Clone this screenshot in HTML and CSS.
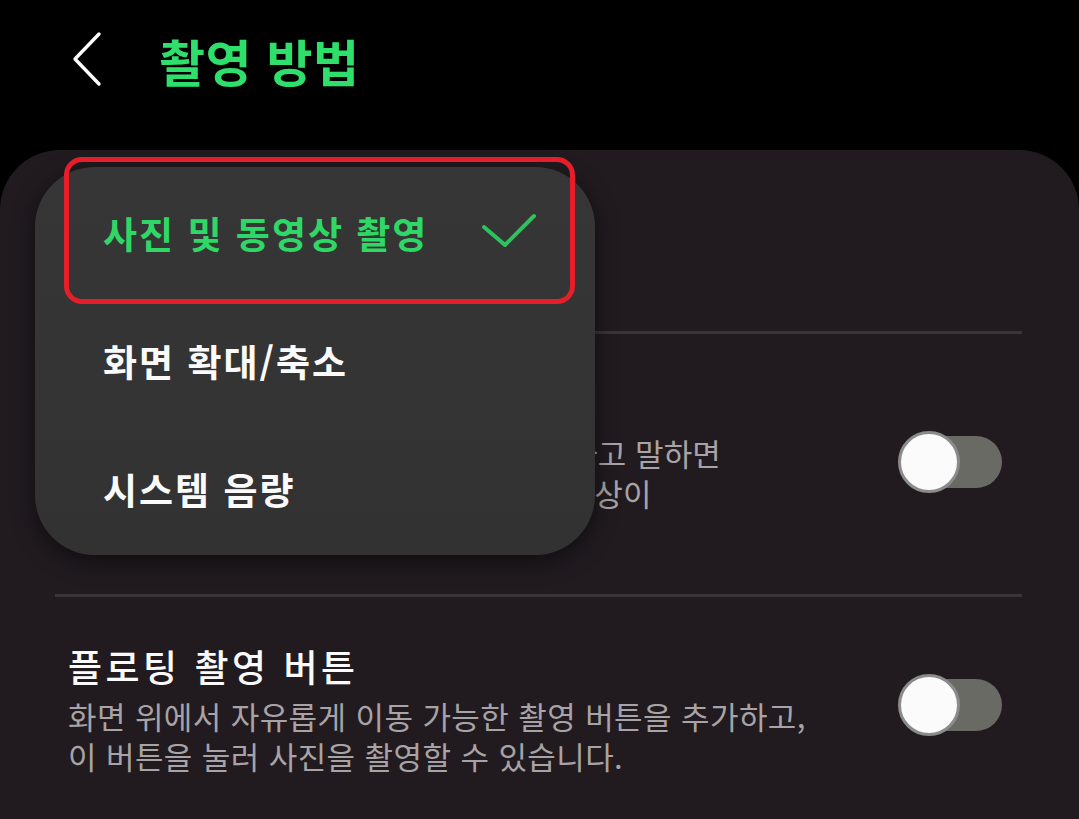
FILE: index.html
```html
<!DOCTYPE html>
<html lang="ko">
<head>
<meta charset="utf-8">
<title>촬영 방법</title>
<link rel="stylesheet" href="styles.css">
</head>
<body>
<div class="screen">
  <header class="topbar">
    <svg class="back" width="32" height="56" viewBox="0 0 32 56" aria-hidden="true">
      <polyline points="27,3 3,28 27,53" fill="none" stroke="#ffffff" stroke-width="3.4" stroke-linecap="round" stroke-linejoin="round"/>
    </svg>
    <h1 class="title">촬영 방법</h1>
  </header>

  <main class="card">
    <div class="list">
      <div class="row row-first">
        <div class="row-text">
          <div class="row-title">음량 버튼 누르기</div>
          <div class="row-sub">사진 및 동영상 촬영</div>
        </div>
      </div>
      <div class="row">
        <div class="row-text">
          <div class="row-title">음성 명령</div>
          <div class="row-desc"><span class="tight">'스마일', '치즈', '캡처', '촬영', '찰칵'이라고 말하면</span><br>사진이 촬영되고, '녹화'라고 말하면 동영상이<br>촬영됩니다.</div>
        </div>
        <div class="toggle"><span class="track"></span><span class="thumb"></span></div>
      </div>
      <div class="row">
        <div class="row-text">
          <div class="row-title">플로팅 촬영 버튼</div>
          <div class="row-desc">화면 위에서 자유롭게 이동 가능한 촬영 버튼을 추가하고,<br>이 버튼을 눌러 사진을 촬영할 수 있습니다.</div>
        </div>
        <div class="toggle"><span class="track"></span><span class="thumb"></span></div>
      </div>
    </div>

    <div class="menu">
      <div class="highlight"></div>
      <div class="menu-item selected">
        <span>사진 및 동영상 촬영</span>
        <svg class="check" width="56" height="36" viewBox="0 0 56 36" aria-hidden="true">
          <polyline points="3,14 24,32 53,3" fill="none" stroke="#2bc45c" stroke-width="4" stroke-linecap="round" stroke-linejoin="round"/>
        </svg>
      </div>
      <div class="menu-item">화면 확대/축소</div>
      <div class="menu-item">시스템 음량</div>
    </div>
  </main>
</div>
</body>
</html>
```

FILE: styles.css
```css
* { box-sizing: border-box; }

html, body {
  margin: 0;
  padding: 0;
  background: #000000;
}

body {
  font-family: "Noto Sans CJK KR", "Noto Sans", sans-serif;
  color: #fafafa;
}

.screen {
  width: 1079px;
  height: 819px;
  overflow: hidden;
  display: flex;
  flex-direction: column;
}

.topbar {
  height: 120px;
  display: flex;
  align-items: center;
  padding-left: 72px;
  flex-shrink: 0;
}

.back {
  display: block;
  margin-top: -2px;
}

.title {
  margin: 0 0 0 55px;
  font-size: 50px;
  font-weight: 700;
  color: #2ee06b;
  line-height: 1;
  letter-spacing: 0.5px;
}

.card {
  position: relative;
  margin-top: 30px;
  flex: 1;
  background: #211b20;
  border-radius: 60px 60px 0 0;
}

.list {
  margin: 0 57px 0 55px;
}

.row {
  display: flex;
  align-items: center;
  justify-content: space-between;
  padding: 47px 20px 41px 13px;
  border-top: 3px solid #3b3439;
}

.row-first {
  border-top: none;
  padding-top: 44px;
  padding-bottom: 49px;
}

.row-title {
  font-size: 37px;
  font-weight: 500;
  line-height: 44px;
  letter-spacing: 3.5px;
  color: #fafafa;
}

.row-sub {
  margin-top: 4px;
  font-size: 31px;
  line-height: 40px;
  color: #2ee06b;
}

.row-desc {
  margin-top: 8px;
  font-size: 31px;
  line-height: 40px;
  letter-spacing: 0.4px;
  color: #a8a3a6;
}

.tight {
  letter-spacing: 0.1px;
}

.toggle {
  position: relative;
  width: 104px;
  height: 64px;
  margin-top: -10px;
  flex-shrink: 0;
}

.track {
  position: absolute;
  left: 4px;
  right: 0;
  top: 6px;
  height: 52px;
  border-radius: 26px;
  background: #6a6a64;
}

.thumb {
  position: absolute;
  left: 0;
  top: 1px;
  width: 62px;
  height: 62px;
  border-radius: 50%;
  background: #fbfbfb;
  border: 3px solid #8c8b8c;
}

.menu {
  position: absolute;
  left: 35px;
  top: 17px;
  width: 560px;
  height: 388px;
  padding-top: 2px;
  border-radius: 60px;
  background: linear-gradient(180deg, #363636 0%, #323232 100%);
  box-shadow: 0 6px 22px rgba(0, 0, 0, 0.55);
}

.menu-item {
  height: 128px;
  display: flex;
  align-items: center;
  justify-content: space-between;
  padding: 0 58px 0 68px;
  font-size: 37px;
  font-weight: 700;
  color: #fafafa;
  letter-spacing: 2px;
}

.menu-item.selected {
  color: #2fd866;
}

.check {
  display: block;
  margin-top: -4px;
}

.highlight {
  position: absolute;
  left: 29px;
  top: -10px;
  width: 511px;
  height: 147px;
  border: 5px solid #e51e2a;
  border-radius: 18px;
  pointer-events: none;
}
```
